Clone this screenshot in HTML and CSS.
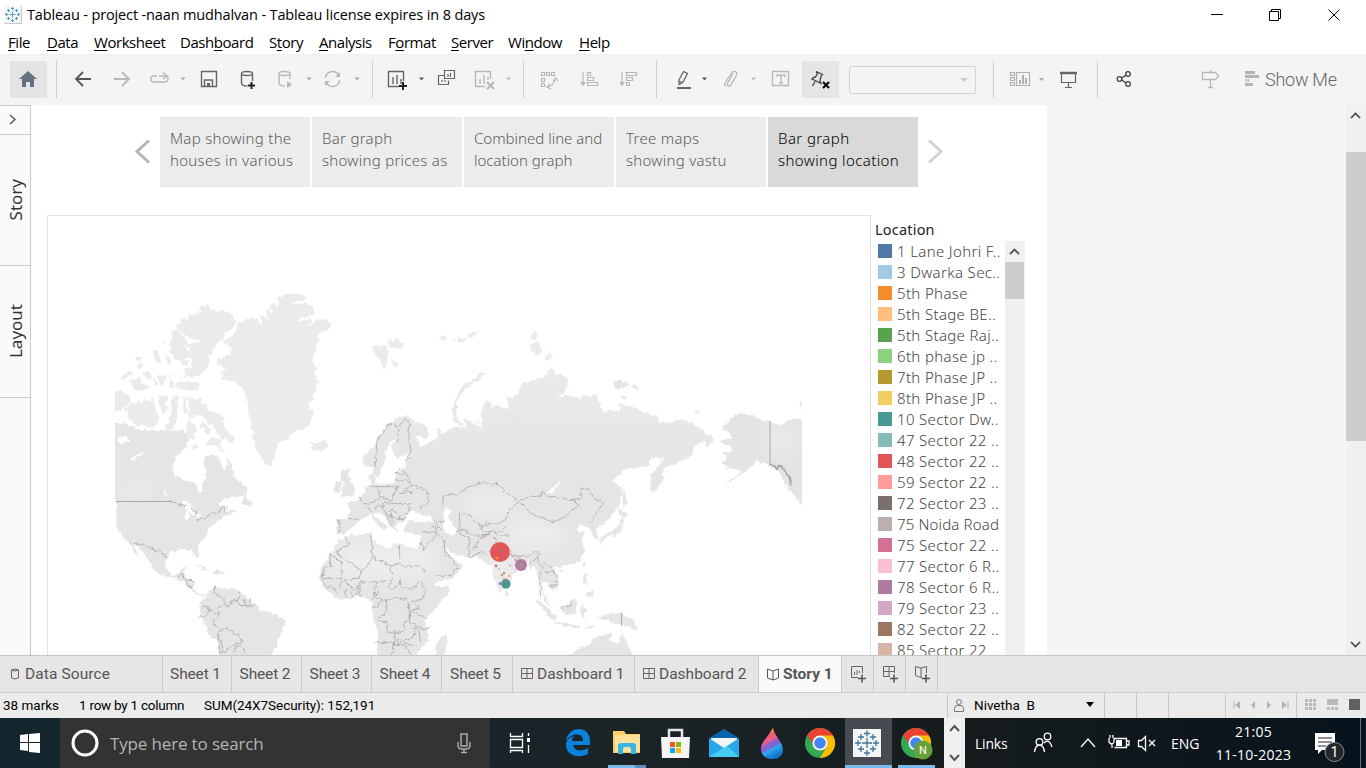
FILE: index.html
```html
<!DOCTYPE html>
<html lang="en">
<head>
<meta charset="utf-8">
<title>Tableau - project -naan mudhalvan</title>
<link rel="stylesheet" href="styles.css">
</head>
<body>
<div class="app">
<header class="titlebar">
  <svg class="logo" viewBox="0 0 18 18"><path d="M0 0h18v18H0z" fill="#c9c9c9"/><path d="M0 0h17v17H0z" fill="#f4f7f8"/><path d="M8.500 5.500v6M5.500 8.500h6M8.500 1v3M7 2.500h3M8.500 13v3M7 14.500h3M1 8.500h3M2.500 7v3M13 8.500h3M14.500 7v3M4.500 3v3M3 4.500h3M12.500 3v3M11 4.500h3M4.500 11v3M3 12.500h3M12.500 11v3M11 12.500h3" stroke="#5799b8"/></svg>
  <span class="title">Tableau - project -naan mudhalvan - Tableau license expires in 8 days</span>
  <svg class="winctl" viewBox="1200 0 166 28"><g fill="none" stroke="#000"><path d="M1211 13.500h12M1269.500 10.500h9v9h-9zM1271.500 10v-1.500h9v9h-2M1328.500 8.500l11 11M1339.500 8.500l-11 11"/></g></svg>
</header>
<nav class="menubar"><span class="m1"><u>F</u>ile</span><span class="m2"><u>D</u>ata</span><span class="m3"><u>W</u>orksheet</span><span class="m4">Dash<u>b</u>oard</span><span class="m5">S<u>t</u>ory</span><span class="m6"><u>A</u>nalysis</span><span class="m7">F<u>o</u>rmat</span><span class="m8"><u>S</u>erver</span><span class="m9">Wi<u>n</u>dow</span><span class="m10"><u>H</u>elp</span></nav>
<div class="toolbar">
  <div class="home"><svg width="37" height="37" viewBox="10 61 37 37"><path d="M28 71l9 8h-3v8h-4v-5h-4v5h-4v-8h-3z" fill="#657180"/></svg></div>
  <svg class="tool g1" viewBox="57 61 315 37"><g fill="none" stroke="#b7b7b7" stroke-width="1.400">
    <path d="M91 79H76M83 72l-7 7 7 7" stroke="#555" stroke-width="1.800"/><path d="M114 79h15M122 72l7 7-7 7" stroke-width="1.800"/>
    <path d="M157 76h-3q-3 0-3 3t3 3h11q3 0 3-3t-3-3h-6M163 72.500l4 3.500-4 3"/>
    <path d="M201.500 71.500h15v15h-15zM204.500 86v-6h8v6" stroke="#666"/><path d="M207 83h3v3h-3z" fill="#666" stroke="none"/>
    <ellipse cx="247" cy="73.500" rx="5.500" ry="2" stroke="#666"/><path d="M241.500 74v9q0 3 6 3M252.500 74v7" stroke="#666"/><path d="M248 85.500h7M251.500 82v7" stroke="#222" stroke-width="2"/>
    <ellipse cx="284.500" cy="73.500" rx="5.500" ry="2"/><path d="M279 74v9q0 3 6 3M290 74v5"/><path d="M287 81v7l5-3.500z" fill="#b7b7b7" stroke="none"/>
    <path d="M325.500 78a7 7 0 0 1 13-3M339.500 80a7 7 0 0 1-13 3"/><path d="M340 72v5h-5zM325 86v-5h5z" fill="#b7b7b7" stroke="none"/>
    </g><path d="M180.500 77.500h5l-2.500 3zM306.500 77.500h5l-2.500 3zM354.500 77.500h5l-2.500 3z" fill="#aaa"/></svg>
  <svg class="tool g2" viewBox="373 61 150 37"><g fill="none" stroke="#666" stroke-width="1.400">
    <path d="M399 86.500h-10.500v-15h15V81M393 77v7M397 75v9M401 79v5"/><path d="M399 86h8M403 82v8" stroke="#222" stroke-width="2"/>
    <path d="M444.500 70.500h10v8h-10zM444 75.500h-5.500v9h10v-4M442 80v2M445 80v2M448 74v3M450.500 73v4" stroke-width="1.200"/>
    <g stroke="#b7b7b7"><path d="M485 86.500h-9.500v-15h15V79M480 79v5M484 75v9M488 77v3"/><path d="M487 82l7 7M494 82l-7 7" stroke-width="2"/></g></g>
    <path d="M419 77.500h5l-2.500 3z" fill="#555"/><path d="M506 77.500h5l-2.500 3z" fill="#bbb"/></svg>
  <svg class="tool g3" viewBox="524 61 132 37"><g fill="none" stroke="#b7b7b7" stroke-width="1.200">
    <path d="M541.500 72.500h3v3h-3zM546.500 72.500h3v3h-3zM551.500 72.500h3v3h-3zM541.500 78.500h3v3h-3zM541.500 83.500h3v3h-3zM555 79.500q-1 6-7 7M553 81l3-3 2 3M550 84l-3 3 4 2"/>
    <path d="M583 72v13M587.500 72.500h3v3h-3zM587.500 77.500h6v3h-6zM587.500 82.500h10v3h-10zM622 72v13M626.500 72.500h10v3h-10zM626.500 77.500h6v3h-6zM626.500 82.500h3v3h-3z"/></g><path d="M580 82h6l-3 4zM619 82h6l-3 4z" fill="#b7b7b7"/></svg>
  <svg class="tool g4" viewBox="657 61 191 37"><path d="M802 61h37v37h-37z" fill="#e5e5e5"/><g fill="none" stroke="#666" stroke-width="1.300">
    <path d="M679 80l4.500-8.500 4 2-4.500 8.500-4 2.500zM679 81l4 2"/><path d="M677 88h14" stroke-width="2"/>
    <path d="M733 73.500l-5 9q-1.500 3 .5 3.500t3-2l5-9q1-3-1.500-3.500t-4 2l-6 10q-1 3 1 2" stroke="#b7b7b7"/><g stroke="#b7b7b7"><path d="M772.500 71.500h16v14h-16z"/><path d="M777 77v-2h8v2M781 75v8M779 83h4"/></g>
    <path d="M816 71.500l6.500 3-1.500 1.500-1 5 1 2.500-9-4.500q1.500-2 3.500-2l2-3.500zM815 81.500l-2.500 4.500" stroke="#444"/><path d="M823 82l6 6M829 82l-6 6" stroke="#000" stroke-width="2"/></g><path d="M702 77.500h5l-2.500 3z" fill="#555"/><path d="M751 77.500h5l-2.500 3z" fill="#bbb"/></svg>
  <div class="combo"><i></i></div>
  <svg class="tool g5" viewBox="994 61 103 37"><g fill="none" stroke="#b0b0b0" stroke-width="1.200"><path d="M1010.500 72.500h4v3h-4zM1010.500 77.500h4v3h-4zM1010.500 82.500h4v3h-4zM1016.500 72.500h13v13h-13z"/><path d="M1020 80v4M1023 75v9M1026 78v6" stroke-width="2"/><path d="M1061.500 74v8.500h14V74M1068.500 83v4M1065 87.500h7" stroke="#666"/><path d="M1060 73h17" stroke="#666" stroke-width="2.500"/></g><path d="M1039 78h5l-2.500 3z" fill="#aaa"/></svg>
  <svg class="tool g6" viewBox="1098 61 163 37"><g fill="none" stroke="#444" stroke-width="1.300"><circle cx="1119.500" cy="79" r="2.300"/><circle cx="1128" cy="74" r="2.300"/><circle cx="1128" cy="84" r="2.300"/><path d="M1122 78l4-3M1122 80l4 3"/><path d="M1202.500 72.500h13l3 3.500-3 3.500h-13zM1210.500 70v2M1210.500 80v7M1208 87.500h5" stroke="#b7b7b7"/></g><path d="M1245 71h10v3h-10zM1245 75h14v3h-14zM1245 83h8v3h-8z" fill="#b4b4b4"/><path d="M1245 79h5v3h-5z" fill="#d0d0d0"/></svg>
  <span class="showme">Show Me</span>
</div>
<main class="workspace">
  <aside class="side"><div class="expand"><svg width="30" height="28"><path d="M10 9l5 4.500-5 4.500" fill="none" stroke="#555" stroke-width="1.400"/></svg></div><div class="vtab v1"><span>Story</span></div><div class="vtab v2"><span>Layout</span></div></aside>
  <section class="canvas">
    <div class="storynav"><svg width="25" height="70" viewBox="0 0 25 70"><path d="M16 23.500L4 34.500l12 11" fill="none" stroke="#b5b5b5" stroke-width="3"/></svg>
      <div class="point">Map showing the<br>houses in various</div><div class="point">Bar graph<br>showing prices as</div><div class="point tight">Combined line and<br>location graph</div><div class="point">Tree maps<br>showing vastu</div><div class="point on">Bar graph<br>showing location</div>
      <svg width="25" height="70" viewBox="0 0 25 70"><path d="M9 23.500l12 11-12 11" fill="none" stroke="#d2d2d2" stroke-width="3"/></svg></div>
    <div class="sheet">
      <div class="mapframe">
<svg class="map" viewBox="48 216 822 439" width="822" height="439">
<defs><linearGradient id="north" gradientUnits="userSpaceOnUse" x1="0" y1="-450" x2="0" y2="60"><stop offset="0" stop-color="#ededed"/><stop offset="1" stop-color="#e5e5e5"/></linearGradient>
<filter id="coast" filterUnits="userSpaceOnUse" x="48" y="216" width="822" height="439"><feTurbulence type="fractalNoise" baseFrequency=".22" numOctaves="2" seed="4"/><feDisplacementMap in="SourceGraphic" scale="5" xChannelSelector="R" yChannelSelector="G"/></filter>
<filter id="soft"><feGaussianBlur stdDeviation="8"/></filter>
<clipPath id="world"><path d="M115 216h687v439H115z"/></clipPath></defs>
<g clip-path="url(#world)">
<g filter="url(#coast)">
<!-- Greenland and the Arctic islands -->
<g transform="translate(100 280) scale(.33333)" fill="#ebebeb">
<path transform="translate(6 8)" d="M395 155l18-35 20-10 10 8 3-14 12 3 6-2 16 25-6-30 10-4 18 22-14-35 10-7 18 20-12-30 14-5 8 16 8-22-14-4 8-8 8 2 17-13h28l20 3 12 9-10 11-34 6 5 4 38-4 16 10 12 12-2 14-25 4-26 12 12 2 26-8 2 10-10 16 14-8 12-14 18 4 5-6 14 4 6 14-12 14-18 6-10 14 8 10-18 16 9 12-12 20 2 28 12 8-8 14 2 16 10 12-10 12 2 14-12 14 6 12-18 12 6 20 10 12-12 16 6 14-24 16-34 8-14 22-27 10-6 12-6 30-12 32-14-10-12-14-14-26-14-34 4-20-12-10 8-20-8-12-4-18-4-26-3-20-14-30-22-18-42-4 8-12-8-12 20-6-32-20 5-12 35-12 8-20-28-20z"/>
<path d="M320 68l-6 10-17 2 3 20-11-6-3 12-24-2 4 14-20-4-4 18-16 2 8 14-20 6 4 16-10 10 4 20-6 10 18 28 20 8 24-18 12 10-8 18 16 12 28 4 14-26-4-16 14-20 4-14 22-18 12-20 24-16 9-17-14-10 6-10-32-14-18 4-8-10-8 8z"/>
<path d="M156 210l16 4 12 32-14 2zM196 228l18 12-4 14-10-4zM108 232l22-2-6 14-20-2zM112 250l16-2-4 16-10 4zM128 280l18-10 12 24-12 8zM58 295l28-22 10 4-20 22zM88 302l30-12 8 20 26 8-28 15-18-4zM160 290l14 20-12 8zM172 290l18-8 8 14-10 22-8-6zM204 278l10 8-6 8zM212 296l10 10-4 22-10-8zM248 266l38-4 20 10-10 16-38 4zM234 304l64 4 2 20-34 6-40-14zM242 244l18-4 10 12-22 6z"/>
<path d="M35 338l28-6 30 16-6 24-34 22h-18zM92 366l14 10 10-16 8 14 12-20 16 8 6-12 8 40 14 28-22 28-24-10-22 2-30-28 4-14-22-6 24-14zM176 346l28 2-6 26 10 10-16 20-16-30zM216 344l22 4-8 46 4 22-12 22-14-4 6-60zM248 354l12-6-2 36 12 24-18-10zM262 352l16-4 4 14-12 20zM268 386l22-34 16 2-2 20 14-2 4 16 46 20 2 28 32 40-6 16-20-18-16 2-20-40-14-2-12-22-26-4-22 14zM262 424l18 4 12 18-14 32-20-10zM298 446l6-22 16 14-10 8zM316 434l16 16-4 18-12-12zM338 470l30 10-10 18 30 30-46-34-26 2 4-10zM270 496l18 2-6 12zM314 532l40-4 8 12-4 40-44-20zM388 550l8 20h-16zM185 188l10-4v8zM190 438l26-12 6 18-20 8zM280 500l14-8 4 16z"/>
<path transform="translate(4 6)" d="M622 480l18-2 4 10 16-14 18 4 2 14-22 18-24-6-6-8 10-6z"/></g>
<!-- The Americas -->
<g transform="translate(100 450) scale(.33333)" fill="#e5e5e5">
<path d="M30-82L80-80 110-62 150-58 190-60 235-58 250-65 265-30 255-5 225 25 217 50 225 75 245 90 280 95 290 105 292 125 303 133 310 118 305 100 318 85 320 65 312 45 315 20 340 15 360 40 375 65 385 25 395 45 402 75 415 90 435 105 440 125 420 140 375 145 355 165 370 170 385 175 375 187 412 178 390 195 360 205 345 220 325 230 320 260 300 280 292 290 298 315 290 325 275 300 240 297 210 305 200 325 200 355 215 375 240 370 245 355 260 350 250 375 270 390 282 395 280 420 300 432 317 430 310 440 285 428 255 400 230 385 200 380 165 365 150 335 115 290 100 282 120 330 130 342 105 310 92 285 70 262 50 235 48 150 30 150z"/>
<path d="M424 160l4-16 10-20 2 24 14 8v14l-10-8-8 4z"/><path d="M278 344l30 4 24 14-18-2-18-12zM336 368l14-8 26 8-12 6-12-3-16 1z"/>
<path d="M297 480l3-20 20-20v-10l25-20 10 6 20-2 35 4 20 17 35 25 15 20 50 15 27 17-2 18-20 30-5 30-20 22-70 30h-82v-62l-33-30z"/></g>
<g transform="translate(550 330) scale(.33333)" fill="#e4e4e4"><path d="M770 580L755 525 740 505 715 480 700 450 685 420 660 405 620 395 590 420 560 445 520 465 575 425 530 415 515 400 530 390 520 370 545 365 545 350 510 340 515 330 545 325 540 310 515 295 540 265 570 250 610 262 655 272 690 290 705 275 735 265 770 275zM755 210v30l-6-6v-16zM192 155l20-6 10 12 6-10 10 12-18 14-10-4-6 8-12-14zM246 165l20 6 2 8-16-4zM210 195l18 10-8 5zM432 246l14-3 3 7-14 2zM484 363l12 2-8 2z"/></g>
<!-- Eurasia, Africa and Oceania -->
<g transform="translate(310 460) scale(.33333)" fill="url(#north)">
<path d="M157-10L195-50 225-100 260-125 290-135 310-118 345-105 362-75 350-65 318-75 330-40 355-48 385-75 380-95 400-80 430-100 470-100 460-128 485-112 512-100 520-92 512-140 530-182 543-170 550-130 572-105 545-65 532-62 550-75 562-110 540-140 555-165 600-150 585-185 620-195 630-225 660-238 700-245 710-262 725-280 740-258 765-255 775-235 765-205 738-180 770-195 810-185 818-192 840-190 850-200 865-185 880-135 890-150 930-150 930-170 980-155 1005-140 1040-135 1045-115 1080-112 1110-120 1150-110 1190-80 1215-65 1195-40 1180-55 1150-40 1150-15 1100 10 1060 25 1060 60 1025 105 1020 50 1065-10 1025-5 1010 20 945 25 905 65 935 85 930 125 915 150 890 185 860 205 865 235 852 238 840 205 810 195 800 210 826 220 815 235 825 270 810 300 780 315 750 320 730 322 740 345 748 375 730 392 710 370 695 362 700 400 722 440 704 424 690 370 675 320 660 330 655 300 640 320 605 345 600 375 580 388 570 400 550 350 545 315 520 305 500 290 450 290 400 260 410 280 435 300 460 320 430 350 375 370 340 300 325 265 330 225 280 215 290 180 345 185 365 185 350 165 320 160 300 175 270 185 255 200 265 215 240 200 225 170 205 155 190 165 235 200 225 215 180 165 150 180 130 200 100 222 80 220 80 180 115 175 120 150 110 135 145 120 165 90 185 75 175 50 190 35 195 70 240 75 255 65 260 40 290 20 285 8 308-18 290-16 258-6 250-20 245-40 258-62 240-55 230-30 222 10 205 50 195 50 188 20 175 15 160 20z"/>
<path d="M97 28l22-2-4 14 8 28 14 22-6 16-40 5 12-16-8-6 10-16-14-14zM76 70l16-6 6 12-12 20-14 2z"/>
<path d="M115 228l65-10 12 26 48 22 12-16 73 15 10 25 37 70 8 20h38l-3 20-35 40-35 40 5 30 5 30-35 40-5 30H205l-5-50 5-40-15-40-5-40 5-15-30-15h-30l-40 10-30-20-25-25-5-25 5-30 25-35 25-45zM410 518l5 20-18 60h-20v-41l16-26z"/>
<path d="M584 388l10 8 2 14-10 2zM676 415l14 6 36 34 16 28-16-3-30-36zM732 486l40 4 40 10-10 4-66-12zM752 436l24-2 14-18 12 10-8 36-24 6-12-14zM812 444l10-6-2 10 10-6-8 18 6 14-10-4-8-12zM826 398l24-8 2 16-10 8-12-8zM820 340l8 4 2 34-12-12zM860 475l40-15 35 0 30 20 20 27-20-2-30-14-20 0-24-10zM770 610l10-23 22-20 30-10 20-24 30-12 22 0-5 20 26 12 10-38 14 28 10 20 20 50zM822 303l4 8-8 14zM748 328l10 2-6 8zM832 498l24 0-10 6-24 0z"/>
<path d="M936 72l6 20 10 34-10 20-4-28zM928 146l30 16-14 12-18-10zM940 174l-4 34-18 20-20-2-20 16-8-6 20-18 20-6 18-22 4-16zM868 238l10 4-8 16z"/>
<path d="M424-150l15-35 20-40 40-24 18-16 6 8-26 24-34 24-24 38 0 40 20 30-26-14zM490-122l30 20-18-8zM190-345l22 4 14-8 10 30-12 50-12-30-14-12-8-16zM234-360l28 0 20 8-6 22-16-8-20 2zM246-304l20 20-10 8-8-14zM388-370l18-2 8 8-14 6zM428-360l10-4-8 12zM442-374l12 10 16-6-12 20-14-4zM474-378l24-8 2 10-20 10zM660-370l14-22 10 20-14 14zM660-345l24-12 14 30-20 15-14-18zM716-328l14 20-26 10z"/>
</g>
<!-- Inland water -->
<g fill="#fff"><path d="M406 517l5-6 10 4 9 1 3 5-14 1-8-1-6 2zM445 508l7 2-4 8 4 7 5 4-3 6-10-3-1-9zM563 479l-10 13-9 3 13-11zM181 501l10 3 6 12-10-5zM186 512h3l-1 9-3-2zM194 516l8-3-6 7zM163 486l5 11-3 1zM118 438l10-2 2 5-10 3zM130 459l15-8-12 10zM178 329l12 10 14 2-16 3zM184 344l5 8-3 7 4-11z"/></g>
<!-- Relief shading -->
<g fill="#fff" filter="url(#soft)"><g opacity=".3"><ellipse cx="370" cy="560" rx="42" ry="22"/><ellipse cx="535" cy="535" rx="32" ry="14"/><ellipse cx="490" cy="505" rx="28" ry="12"/><ellipse cx="500" cy="575" rx="13" ry="22"/><ellipse cx="138" cy="490" rx="16" ry="8"/><ellipse cx="780" cy="440" rx="16" ry="10"/><ellipse cx="420" cy="560" rx="18" ry="16"/></g></g>
<!-- Country borders -->
<g fill="none" stroke="#a9a9a9" stroke-width="2.500" stroke-linejoin="round">
<g transform="translate(100 450) scale(.33333)"><path d="M215 154l28 10 28 4 16 20 3 22 26-4 22-18h20l8-20 10 2v22M88 279l60 10 20 14 8-4 24 23M235 384l8-14 12 20 26 2M260 395l20 30M345 410l-4 16 30 20 2 20 18 0 6-14 18 0M415 425l2 42 45-2M434 448v18M450 446v18M308 468l26 12 24 14-4-18 14-10M298 502l18-4 16-20M356 495l-18 22 22 25 24-9 26 20 18 24-30 12-36 22-10-64M362 565l8 43M400 608l10-18 14 0 14 22"/></g>
<path d="M770 464l7 5 4-3 9 12 1 7"/>
<g transform="translate(310 460) scale(.33333)"><path d="M195 25l6-80 30-46 20-8 14 20 0 40M270-100l14-24 16 14-6 20 8 70-14 26M268 26l20 14 18 34 44 18 8 34-30 20M162 80l42 0 6 36-46 20M205 80l60 0M264 74l-20 50-36-14M264 98l46-4M166 134l-20-22M172 142l14 14M196 145l28-18 36 4 40 0-6 26-30 18-30-6-14-24M214 145l10-20M222 150l12 24 12 20M240 160l8 24M254 140l-14 12 22 8M265 175l24 2M80 182l10 4-2 32M115 175l32 5M256 40l30 4M252 60l34 0 22 16-36 20"/>
<path d="M366 175l26 12 14-2M378 188l0 14 18 6M335 218l44-2 24 26 2 48M338 270l44-48M330 240l12 30M375 345l48 2 20-26-34-44M380 215l-12-20M445 220l32 14 0 56 40-12M440 215l20-6 40 20 44-6M450 205l-2-46 32 8 34 36M394 145l8-38 46-6 28-20 48-16 22 10 18-2 38 36 24 20-26 18-14 34-20 10-50 6 4 20 32-4 14 12 32 0M516 205l16-22M544 215l-36 22-20 36M550 230l10 14-20 30M590 200l-30 20M628 122l36-14 26 4 6-16 22 14 40 6 12 4 36-4M630 125l30 34 70 28 40-20 36-32-14-10 20-8 2-32 22 0 16 30 30 10-14 22-20 28-12 18M605 285l50 6 26-20 10 12-34 30M607 270l-4 20 30 4M680 280l12 40 10-10 20 10M700 320l-12 30 4 60M705 336l24-4 16 28-16 8M716 380l28-4"/>
<path d="M106 230l14 22-42 24M60 284l34 20 0 52-58 0 4-34 22-2zM78 278l78 56-10 20-48 6M182 220l6 74-32 40M189 294l56 24 24-8 0-55M269 318l56 0 20 20M242 320l4 36-10 22 10 10 20-10 4-20M270 358l4 26 36 0 20-20 16 28-10 26-30 6M230 360l-28 8-46-2-22 26-28-28-10-8M200 370l-12 50M36 360l14 24 20-4 14 24M95 366l-8 22M108 386v28M124 382v26M142 374v34M150 372v36M206 388l-10 26 34 6 30-6 30 4M212 420l-10 20-16 2M230 420l-2 36-26 26 28 4 4 30 18 4 32-8-4-22 16-10 2-20-4-34M300 450l54 26M310 424l18 20-20 6M195 548l60 0 0-38M250 555l34-4 28 6M260 546l40-8 18-20-10-16 48 4M326 510l6 34M280 552l24 30M298 460l4 30 22 8M254 548l-8 38"/>
<path d="M755 445l24-10 16-20M530 290l-10-14M594 320l20-8"/></g></g></g>
<path d="M116 501.500h56M621.500 613v13" fill="none" stroke="#a9a9a9"/><path d="M770 421v43" stroke="#c2c2c2" stroke-width="1.600"/></g>
<!-- Data marks -->
<circle cx="500" cy="552" r="10" fill="#e15759"/><circle cx="501" cy="551" r="1.300" fill="#8b7c7a"/><circle cx="521" cy="565" r="6" fill="#b07aa1"/><circle cx="521" cy="565" r="2" fill="#9e9a8d"/><circle cx="505" cy="581" r="3" fill="#ff9d9a"/><circle cx="506" cy="584" r="4.700" fill="#499894"/><circle cx="500.500" cy="583.500" r="1.800" fill="#8e91a5"/><circle cx="496" cy="566" r="1.400" fill="#d37295"/><circle cx="499" cy="569" r="1" fill="#caa2b5"/><circle cx="497" cy="558" r="1.400" fill="#f28e2b"/><circle cx="515.500" cy="560" r="1.200" fill="#df8b87"/><circle cx="502" cy="575" r="1.300" fill="#d4a24e"/><circle cx="504" cy="573" r="1.200" fill="#b6879f"/><circle cx="509" cy="576" r="1.200" fill="#f3a6a4"/>
</svg></div>
      <div class="legend"><div class="ltitle">Location</div><div class="lbody"><ul>
<li><i style="background:#4e79a7"></i>1 Lane Johri F..</li><li><i style="background:#a0cbe8"></i>3 Dwarka Sec..</li><li><i style="background:#f28e2b"></i>5th Phase</li><li><i style="background:#ffbe7d"></i>5th Stage BE..</li><li><i style="background:#59a14f"></i>5th Stage Raj..</li><li><i style="background:#8cd17d"></i>6th phase jp ..</li><li><i style="background:#b6992d"></i>7th Phase JP ..</li><li><i style="background:#f1ce63"></i>8th Phase JP ..</li><li><i style="background:#499894"></i>10 Sector Dw..</li><li><i style="background:#86bcb6"></i>47 Sector 22 ..</li><li><i style="background:#e15759"></i>48 Sector 22 ..</li><li><i style="background:#ff9d9a"></i>59 Sector 22 ..</li><li><i style="background:#79706e"></i>72 Sector 23 ..</li><li><i style="background:#bab0ac"></i>75 Noida Road</li><li><i style="background:#d37295"></i>75 Sector 22 ..</li><li><i style="background:#fabfd2"></i>77 Sector 6 R..</li><li><i style="background:#b07aa1"></i>78 Sector 6 R..</li><li><i style="background:#d4a6c8"></i>79 Sector 23 ..</li><li><i style="background:#9d7660"></i>82 Sector 22 ..</li><li><i style="background:#d7b5a6"></i>85 Sector 22</li></ul>
        <div class="lscroll"><svg width="20" height="21"><path d="M5 13l4.500-4.500L14 13" fill="none" stroke="#555" stroke-width="1.800"/></svg><b></b></div></div></div>
    </div>
  </section>
  <div class="vscroll"><svg width="20" height="47"><path d="M5 13l4.500-4.500L14 13" fill="none" stroke="#444" stroke-width="1.600"/></svg><b></b><svg class="dn" width="20" height="20"><path d="M5 7l4.500 4.500L14 7" fill="none" stroke="#444" stroke-width="1.600"/></svg></div>
</main>
<div class="tabs">
  <div class="tab t0"><svg width="10" height="12"><path d="M1.500 2v8q3 2 7 0V2q-3.500-2-7 0q3.500 2 7 0" fill="none" stroke="#666"/></svg><span>Data Source</span></div><div class="tab ts">Sheet 1</div><div class="tab ts">Sheet 2</div><div class="tab ts">Sheet 3</div><div class="tab ts">Sheet 4</div><div class="tab ts">Sheet 5</div>
  <div class="tab td"><svg width="12" height="12"><path d="M.5.500h11v10H.5zM6 .5v10M.5 5.500h11" fill="none" stroke="#666"/></svg><span>Dashboard 1</span></div><div class="tab td t2"><svg width="12" height="12"><path d="M.5.500h11v10H.5zM6 .5v10M.5 5.500h11" fill="none" stroke="#666"/></svg><span>Dashboard 2</span></div>
  <div class="tab story"><svg width="12" height="13"><path d="M.5 1l5.500 2 5.500-2v9L6 12 .5 10zM6 3v9" fill="none" stroke="#555"/></svg><span>Story 1</span></div>
  <div class="tab add"><svg width="18" height="18"><path d="M9 12.500H2.500v-11h11V8M5.500 7v3M8 5v5M10.500 6v2" fill="none" stroke="#666"/><path d="M9 13.500h8M13 9.500v8" stroke="#555" stroke-width="1.600"/></svg></div><div class="tab add"><svg width="18" height="18"><path d="M9 11.500H2.500v-10h11V8M8 1.500v10M2.500 6.500h11" fill="none" stroke="#666"/><path d="M9 13.500h8M13 9.500v8" stroke="#555" stroke-width="1.600"/></svg></div><div class="tab add"><svg width="18" height="18"><path d="M9 13l-6.500-2.500v-9L8 3l5.500-1.500V8M8 3v9" fill="none" stroke="#666"/><path d="M9 13.500h8M13 9.500v8" stroke="#555" stroke-width="1.600"/></svg></div>
</div>
<div class="status"><span class="s1">38 marks</span><span class="s2">1 row by 1 column</span><span class="s3">SUM(24X7Security): 152,191</span>
  <div class="user"><svg width="12" height="15"><circle cx="6" cy="4" r="2.500" fill="none" stroke="#777"/><path d="M1.500 13.500v-3q0-3 2.500-3h4q2.500 0 2.500 3v3z" fill="none" stroke="#777"/></svg><span>Nivetha&nbsp; B</span><svg class="dd" width="9" height="6"><path d="M0 0h8l-4 5z"/></svg></div><div class="c2"></div><div class="c2"></div><div class="c3"></div>
  <svg class="pager" viewBox="1226 693 140 25"><path d="M1240 701v8l-5-4zM1255 701v8l-4-4zM1267 701v8l4-4zM1282 701v8l5-4z" fill="#b4b4b4"/><path d="M1234 701v8M1288 701v8" stroke="#b4b4b4"/><path d="M1296.500 693v25" stroke="#c8c8c8"/><path d="M1305 699h3v3h-3zM1309 699h3v3h-3zM1313 699h3v3h-3zM1305 703h3v3h-3zM1309 703h3v3h-3zM1313 703h3v3h-3zM1305 707h3v3h-3zM1309 707h3v3h-3zM1313 707h3v3h-3zM1327 699h11v6h-11zM1327 707h3v3h-3zM1331 707h3v3h-3zM1335 707h3v3h-3z" fill="#b9b9b9"/><path d="M1349 699h11v11h-11z" fill="#606060"/></svg></div>
<footer class="taskbar">
  <div class="start"><svg width="60" height="50"><path d="M20 17l8-1v8h-8zM29 16l11-1v9H29zM20 25h8v8l-8-1zM29 25h11v10l-11-1z" fill="#fff"/></svg></div>
  <div class="search"><svg width="28" height="28"><circle cx="14" cy="14" r="12" fill="none" stroke="#fff" stroke-width="3"/></svg><span>Type here to search</span><svg class="mic" width="16" height="24"><path d="M5 3h6v12H5zM2 11v3q0 4 4 4h4q4 0 4-4v-3M8 18v4M5 21.500h6" fill="none" stroke="#aaa" stroke-width="1.500"/></svg></div>
  <svg class="apps" viewBox="490 718 454 50" width="454" height="50">
  <defs><linearGradient id="paint" x1="0" y1="0" x2=".4" y2="1"><stop offset=".15" stop-color="#ffc83d"/><stop offset=".34" stop-color="#f0596e"/><stop offset=".5" stop-color="#e8608f"/><stop offset=".55" stop-color="#8d62c5"/><stop offset=".7" stop-color="#7a66d0"/><stop offset=".75" stop-color="#34a8ef"/><stop offset="1" stop-color="#1179cd"/></linearGradient></defs>
  <path d="M845 718h47v50h-47z" fill="#454b50"/><path d="M608 765h27v3h-27zM845 765h47v3h-47zM898 765h37v3h-37z" fill="#76b9ed"/><path d="M635 765h11v3h-11z" fill="#5b8db5"/>
  <g fill="none" stroke="#fff" stroke-width="1.300"><path d="M510.500 733v3.500h12V733M510.500 739.500h12v8h-12zM510.500 753v-2.500h12v2.500M528.500 733v3M528.500 745v8"/></g><path d="M527 738h3v4h-3z" fill="#fff"/>
  <path d="M566 741c1-8 7-12 13-12 7 0 11 5 11 12v4h-17c1 6 9 7 15 3v6c-10 5-22 1-22-9 0-5 4-8 8-9-1 1-2 3-2 5h11c0-9-12-8-17 0z" fill="#0881db"/>
  <path d="M613 731h11l2 3h14v19h-27z" fill="#f7cf68"/><path d="M615 735h25v17h-25z" fill="#ffe29a"/><path d="M618 754v-8q0-3 3-3h12q3 0 3 3v8h-5v-5q0-2-2-2h-4q-2 0-2 2v5z" fill="#35b5e8"/>
  <path d="M661 737h29l-1 21h-27z" fill="#f5f5f5"/><path d="M669 738v-8h13v8" fill="none" stroke="#e5e5e5" stroke-width="2.500"/><path d="M670 742h5v5h-5z" fill="#f35325"/><path d="M676 742h5v5h-5z" fill="#81bc06"/><path d="M670 748h5v5h-5z" fill="#05a6f0"/><path d="M676 748h5v5h-5z" fill="#ffba08"/>
  <path d="M709 738l15-9 15 9z" fill="#0864ad"/><path d="M711 738h26v11h-26z" fill="#f4f4f4"/><path d="M709 738l15 10 15-10v19h-30z" fill="#28a8ea"/><path d="M709 757l18-11 12 11z" fill="#45ccf5"/>
  <path d="M773 728c-5 9-13 15-12 22 1 12 22 12 22 0 0-8-8-13-10-22z" fill="url(#paint)"/>
  <g id="chrome"><circle cx="820" cy="743" r="15" fill="#34a853"/><path d="M807 735.500a15 15 0 0 1 26 0l-3 6-10-5-6 9z" fill="#ea4335"/><path d="M820 735.500h13a15 15 0 0 1-13 22.500l6.500-11z" fill="#fbbc04"/><circle cx="820" cy="743" r="7.500" fill="#fff"/><circle cx="820" cy="743" r="5.800" fill="#4285f4"/></g><use href="#chrome" x="96"/>
  <circle cx="923" cy="750" r="9.500" fill="#689f38"/><text x="923" y="754" class="badge">N</text>
  <path d="M853 729h28v28h-28z" fill="#f3f5f5"/><path d="M867 738v10M862 743h10M867 730.500v6M864 733.500h6M867 750v6M864 753h6M855 743h6M858 740v6M873 743h6M876 740v6M861 734v6M858 737h6M873 734v6M870 737h6M861 746v6M858 749h6M873 746v6M870 749h6" stroke="#42769b" stroke-width="1.300"/></svg>
  <div class="tscroll"><svg width="21" height="50"><path d="M6 13l4.500-5L15 13M6 37l4.500 5L15 37" fill="none" stroke="#555" stroke-width="2"/></svg></div>
  <span class="links">Links</span><svg class="tray" width="154" height="50" viewBox="1017 718 154 50"><g fill="none" stroke="#fff" stroke-width="1.300"><circle cx="1039.500" cy="742" r="3.300"/><circle cx="1047.500" cy="736.500" r="3.300"/><path d="M1034.500 752q1-7 5-7 4 0 5 7M1044 743q5-5 8 4M1081 747l7-8 7 8M1114.500 738.500h12v9h-12M1127 741h2v4h-2M1109 738v4q3 4 5 0v-4M1110 735v3M1113 735v3M1112 743v5M1138.500 740.500h3l4-4v14l-4-4h-3zM1149 740l6 6M1155 740l-6 6"/></g><path d="M1116 740h6v6h-6z" fill="#fff"/></svg>
  <span class="eng">ENG</span><div class="clock">21:05<br>11-10-2023</div><svg class="notice" width="66" height="50" viewBox="1300 718 66 50"><path d="M1315 733h20v17h-13l-4 4v-4h-3z" fill="#fff"/><path d="M1318 738h14M1318 742h14M1318 746h8" stroke="#222"/><circle cx="1334.500" cy="752" r="9.500" fill="#23282b" stroke="#858b8e"/><text x="1334.500" y="757" class="count">1</text><path d="M1360.500 718v50" stroke="#66717a"/></svg>
</footer>
</div>
</body>
</html>
```

FILE: styles.css
```css
* { box-sizing: border-box; }
body { margin: 0; font-family: "Open Sans", sans-serif; color: #000; }
svg { display: block; flex: none; }
span, li, .tab, .point, .clock { white-space: nowrap; }
.app { width: 1366px; height: 768px; display: flex; flex-direction: column; overflow: hidden; background: #fff; }
.titlebar { height: 29px; display: flex; align-items: center; padding-left: 4px; font-size: 14.500px; }
.logo { width: 18px; height: 18px; }
.title { margin-left: 5px; letter-spacing: -.14px; }
.winctl { width: 166px; height: 28px; margin-left: auto; }
.menubar { height: 25px; display: flex; align-items: center; padding: 1px 0 0 8px; font-size: 15px; letter-spacing: -.45px; }
.menubar u { text-underline-offset: 2px; }
.m1 { width: 39px; } .m2 { width: 47px; } .m3 { width: 86px; } .m4 { width: 89px; } .m5 { width: 50px; }
.m6 { width: 69px; } .m7 { width: 63px; } .m8 { width: 57px; } .m9 { width: 71px; }
.toolbar { height: 51px; display: flex; align-items: center; background: #f4f4f4; border-top: 1px solid #ededed; padding: 0 0 1px 10px; }
.home { width: 37px; height: 37px; background: #e4e4e4; margin-right: 9px; }
.tool { height: 37px; box-sizing: content-box; border-left: 1px solid #cfcfcf; }
.g1 { width: 315px; } .g2 { width: 150px; } .g3 { width: 132px; } .g4 { width: 191px; }
.g5 { width: 103px; margin-left: 17px; } .g6 { width: 163px; }
.combo { width: 127px; height: 28px; margin-left: 1px; border: 1px solid #d3d3d3; border-radius: 2px; display: flex; align-items: center; justify-content: flex-end; padding-right: 7px; }
.combo i { border: 4px solid transparent; border-top-color: #ccc; border-bottom: 0; }
.showme { margin-left: 4px; font: 300 18px Roboto, sans-serif; letter-spacing: -.25px; color: #666; }
.workspace { height: 550px; display: flex; background: #f5f5f5; }
.side { width: 31px; border-right: 1px solid #c9c9c9; border-top: 1px solid #c9c9c9; background: #fafafa; }
.expand { height: 29px; border-bottom: 1px solid #cecece; }
.vtab { display: flex; align-items: center; justify-content: center; border-bottom: 1px solid #cecece; font: 17px "Noto Sans", sans-serif; color: #333; }
.vtab span { writing-mode: vertical-rl; transform: rotate(180deg); }
.v1 { height: 131px; } .v2 { height: 132px; }
.canvas { width: 1016px; background: #fff; overflow: hidden; }
.storynav { display: flex; gap: 2px; height: 70px; margin: 12px 0 28px 102px; }
.point { width: 150px; background: #ececec; padding: 10px; font: 300 15px/22px "Noto Sans", sans-serif; letter-spacing: .28px; color: #5c5c5c; }
.point.tight { letter-spacing: 0; }
.point.on { background: #d9d9d9; color: #000; letter-spacing: .4px; }
.sheet { display: flex; height: 440px; padding-left: 16px; }
.mapframe { width: 824px; border: 1px solid #e3e3e3; border-bottom: 0; }
.legend { width: 154px; padding: 4px 0 0 4px; font: 15px "Noto Sans", sans-serif; color: #444; }
.ltitle { height: 22px; line-height: 21px; font-size: 14.500px; letter-spacing: .2px; color: #222; }
.lbody { display: flex; }
ul { list-style: none; margin: -1px 0 0; padding: 0 0 0 3px; width: 130px; }
li { display: flex; align-items: center; height: 21px; font-weight: 300; letter-spacing: .35px; }
li:nth-child(14) { letter-spacing: .15px; }
li i { width: 14px; height: 14px; margin-right: 5px; flex: none; }
.lscroll { width: 20px; height: 414px; background: #f0f0f0; }
.lscroll b { display: block; height: 37px; width: 19px; background: #cdcdcd; }
.vscroll { width: 20px; margin-left: auto; background: #f0f0f0; display: flex; flex-direction: column; }
.vscroll b { height: 289px; background: #cdcdcd; }
.dn { margin-top: auto; }
.tabs { height: 38px; display: flex; background: #e6e6e6; border-top: 1px solid #c6c6c6; border-bottom: 1px solid #cbcbcb; font: 15.500px Roboto, sans-serif; color: #555; }
.tab { display: flex; align-items: center; border-right: 1px solid #cacaca; }
.t0 { width: 163px; padding-left: 10px; } .t0 span { margin-left: 5px; letter-spacing: .1px; }
.ts { width: 70px; padding-right: 3px; justify-content: center; letter-spacing: -.15px; } .ts:nth-child(2) { width: 69px; } .ts:nth-child(6) { width: 71px; }
.td { width: 122px; padding-left: 8px; } .td span { margin-left: 4px; } .t2 { width: 124px; }
.story { width: 83px; background: #fafafa; padding-left: 8px; font-weight: 700; } .story span { margin-left: 4px; }
.add { width: 32px; justify-content: center; }
.status { height: 25px; display: flex; align-items: center; background: #ebebeb; font: 13.500px Roboto, sans-serif; padding: 0 0 1px 3px; }
.s1 { width: 76px; } .s2 { width: 125px; letter-spacing: -.25px; } .s3 { width: 743px; letter-spacing: -.04px; }
.user { width: 158px; height: 25px; display: flex; align-items: center; border-left: 1px solid #c8c8c8; border-right: 1px solid #c8c8c8; padding-left: 5px; }
.user span { margin-left: 9px; }
.dd { margin-left: auto; margin-right: 9px; }
.c2, .c3 { width: 32px; height: 25px; border-right: 1px solid #c8c8c8; } .c3 { width: 57px; }
.pager { width: 140px; height: 25px; }
.taskbar { height: 50px; display: flex; align-items: center; background: linear-gradient(90deg, #14252e, #1b2427 45%, #151b1c 72%, #07131d); color: #fff; }
.start { width: 60px; }
.search { width: 430px; height: 50px; display: flex; align-items: center; background: #333; padding-left: 11px; color: #b3b3b3; font-size: 17px; }
.search span { margin-left: 11px; letter-spacing: -.15px; }
.mic { margin-left: auto; margin-right: 18px; }
.badge { font: 11px Roboto, sans-serif; fill: #fff; text-anchor: middle; }
.count { font: 14px Roboto, sans-serif; fill: #fff; text-anchor: middle; }
.tscroll { width: 21px; height: 50px; background: #f0f0f0; }
.links { width: 52px; padding-left: 10px; font-size: 14px; letter-spacing: -.2px; }
.eng { width: 44px; font-size: 14px; }
.clock { width: 85px; margin-left: -4px; text-align: center; font-size: 14px; line-height: 23px; letter-spacing: .25px; }
.notice { margin-left: auto; }
```
